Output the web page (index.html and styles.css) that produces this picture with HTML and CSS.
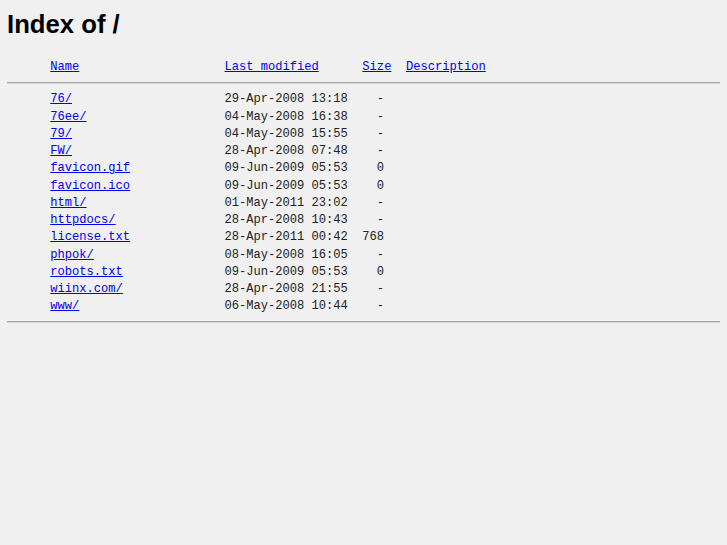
FILE: index.html
```
<!DOCTYPE html>
<html>
<head>
  <meta charset="UTF-8">
  <title>Index of /</title>
  <link rel="stylesheet" href="styles.css">
</head>
<body>
<h1>Index of /</h1>
<pre class="listing"><span class="icon"></span> <a href="?C=N;O=D">Name</a>                    <a href="?C=M;O=A">Last modified</a>      <a href="?C=S;O=A">Size</a>  <a href="?C=D;O=A">Description</a><hr class="rule"><span class="icon"></span> <a href="76/">76/</a>                     29-Apr-2008 13:18    -
<span class="icon"></span> <a href="76ee/">76ee/</a>                   04-May-2008 16:38    -
<span class="icon"></span> <a href="79/">79/</a>                     04-May-2008 15:55    -
<span class="icon"></span> <a href="FW/">FW/</a>                     28-Apr-2008 07:48    -
<span class="icon"></span> <a href="favicon.gif">favicon.gif</a>             09-Jun-2009 05:53    0
<span class="icon"></span> <a href="favicon.ico">favicon.ico</a>             09-Jun-2009 05:53    0
<span class="icon"></span> <a href="html/">html/</a>                   01-May-2011 23:02    -
<span class="icon"></span> <a href="httpdocs/">httpdocs/</a>               28-Apr-2008 10:43    -
<span class="icon"></span> <a href="license.txt">license.txt</a>             28-Apr-2011 00:42  768
<span class="icon"></span> <a href="phpok/">phpok/</a>                  08-May-2008 16:05    -
<span class="icon"></span> <a href="robots.txt">robots.txt</a>              09-Jun-2009 05:53    0
<span class="icon"></span> <a href="wiinx.com/">wiinx.com/</a>              28-Apr-2008 21:55    -
<span class="icon"></span> <a href="www/">www/</a>                    06-May-2008 10:44    -
<hr class="rule"></pre>
</body>
</html>
```
FILE: styles.css
```
html, body {
  background: #f0f0f0;
}
body {
  margin: 8px 7px;
  font-family: "Liberation Sans", Arial, sans-serif;
  color: #000;
}
h1 {
  font-size: 25.7px;
  font-weight: bold;
  margin: 2px 0 20px 0;
  line-height: 29px;
}
.listing {
  font-family: "Liberation Mono", "Courier New", monospace;
  font-size: 12.1px;
  line-height: 17.25px;
  margin: 0;
  color: #222;
}
.listing a {
  color: #0000ee;
}
.icon {
  display: inline-block;
  width: 36px;
}
.rule {
  margin: 5.5px 0 7.5px 0;
  border: none;
  border-top: 1px solid #a8a8a8;
  border-bottom: 1px solid #d8d8d8;
  height: 0;
}
```
